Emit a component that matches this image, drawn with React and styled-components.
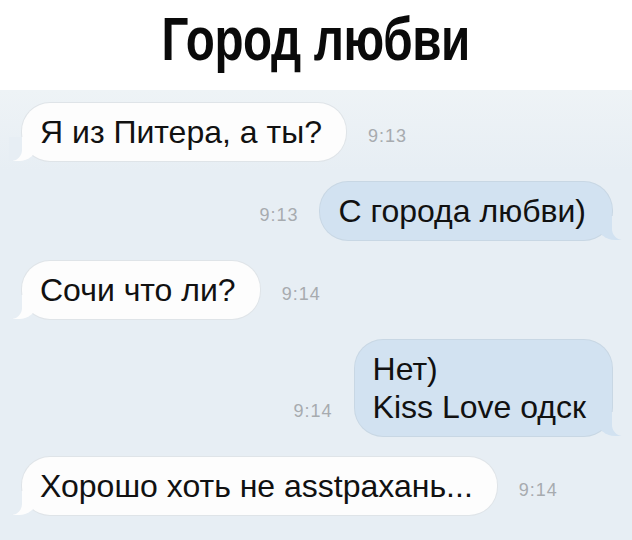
import React from "react";
import styled, { createGlobalStyle, css } from "styled-components";

const GlobalStyle = createGlobalStyle`
  html, body {
    margin: 0;
    padding: 0;
    background: #ffffff;
  }
  body {
    width: 632px;
    height: 540px;
    overflow: hidden;
    font-family: "Liberation Sans", Arial, sans-serif;
  }
`;

const CHAT_BG = "#e7eef4";
const IN_BG = "#fdfdfd";
const OUT_BG = "#d2e2f1";

const Page = styled.div`
  width: 632px;
  height: 540px;
  display: flex;
  flex-direction: column;
  background: #ffffff;
`;

const Header = styled.header`
  height: 90px;
  display: flex;
  justify-content: center;
  align-items: flex-start;
  background: #ffffff;
`;

const Title = styled.h1`
  margin: 0;
  padding-top: 6px;
  font-family: "Liberation Sans", Arial, sans-serif;
  font-weight: 700;
  font-size: 61px;
  line-height: 66px;
  letter-spacing: -0.5px;
  color: #0a0a0a;
  white-space: nowrap;
  transform: scaleX(0.78);
`;

const Chat = styled.main`
  flex: 1;
  display: flex;
  flex-direction: column;
  gap: 21px;
  padding: 13px 20px 0 22px;
  background: linear-gradient(180deg, #eef3f6 0%, ${CHAT_BG} 18%, ${CHAT_BG} 100%);
`;

const Row = styled.div`
  display: flex;
  align-items: flex-end;
  gap: 22px;
  justify-content: ${(p) => (p.$out ? "flex-end" : "flex-start")};
`;

const Time = styled.span`
  font-family: "Liberation Sans", Arial, sans-serif;
  font-size: 18px;
  line-height: 22px;
  letter-spacing: 1px;
  color: #a7abaf;
  padding-bottom: 14px;
`;

const Bubble = styled.div`
  position: relative;
  padding: ${(p) => (p.$out ? "10px 26px 10px 18px" : "10px 24px 10px 18px")};
  border-radius: 28px;
  font-size: 32px;
  line-height: 38px;
  color: #111111;
  background: ${(p) => (p.$out ? OUT_BG : IN_BG)};
  box-shadow: 0 0 0 1px ${(p) => (p.$out ? "#c8d7e4" : "#dfe4e8")};

  &::before,
  &::after {
    content: "";
    position: absolute;
    bottom: 0;
    height: 24px;
  }

  ${(p) =>
    p.$out
      ? css`
          &::before {
            right: -9px;
            width: 24px;
            background: ${OUT_BG};
            border-bottom-left-radius: 18px 16px;
          }
          &::after {
            right: -13px;
            width: 13px;
            background: ${CHAT_BG};
            border-bottom-left-radius: 11px;
          }
        `
      : css`
          &::before {
            left: -9px;
            width: 24px;
            background: ${IN_BG};
            border-bottom-right-radius: 18px 16px;
          }
          &::after {
            left: -13px;
            width: 13px;
            background: ${CHAT_BG};
            border-bottom-right-radius: 11px;
          }
        `}
`;

const Line = styled.div`
  white-space: nowrap;
`;

const messages = [
  { out: false, time: "9:13", lines: ["Я из Питера, а ты?"] },
  { out: true, time: "9:13", lines: ["С города любви)"] },
  { out: false, time: "9:14", lines: ["Сочи что ли?"] },
  { out: true, time: "9:14", lines: ["Нет)", "Kiss Love одск"] },
  { out: false, time: "9:14", lines: ["Хорошо хоть не asstрахань..."] },
];

export default function App() {
  return (
    <Page>
      <GlobalStyle />
      <Header>
        <Title>Город любви</Title>
      </Header>
      <Chat>
        {messages.map((m, i) => (
          <Row key={i} $out={m.out}>
            {m.out && <Time>{m.time}</Time>}
            <Bubble $out={m.out}>
              {m.lines.map((l, j) => (
                <Line key={j}>{l}</Line>
              ))}
            </Bubble>
            {!m.out && <Time>{m.time}</Time>}
          </Row>
        ))}
      </Chat>
    </Page>
  );
}
